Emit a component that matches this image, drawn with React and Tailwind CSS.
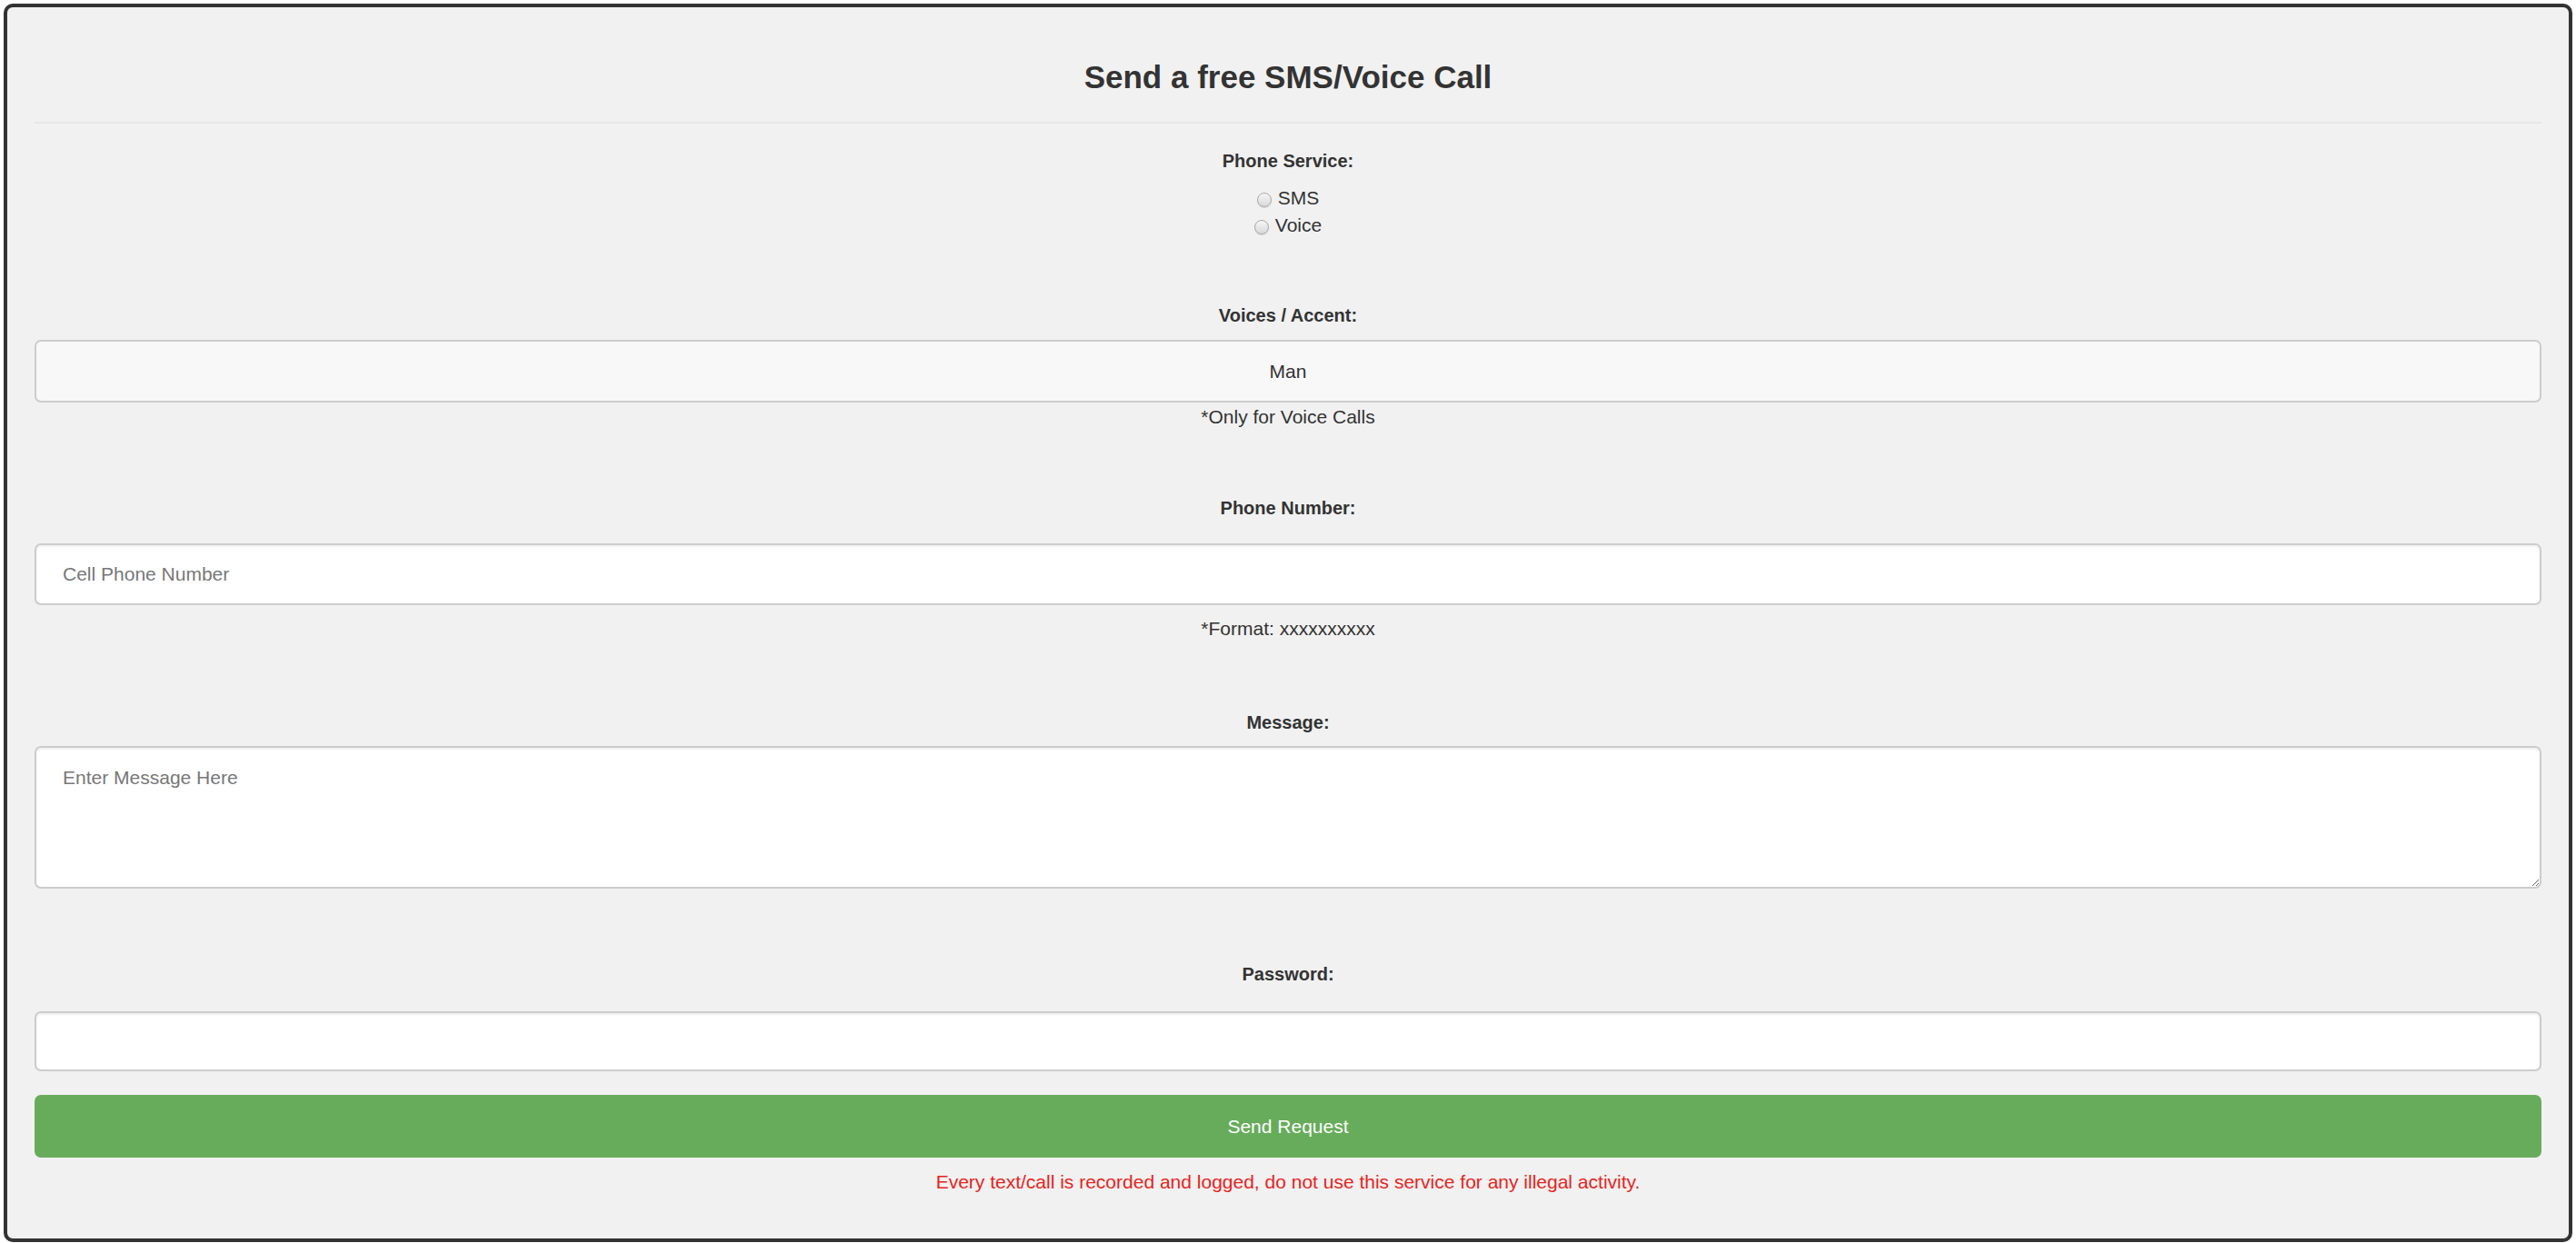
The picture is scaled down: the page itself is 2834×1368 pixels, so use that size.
import React from "react";

function Radio({ label }) {
  return (
    <label className="flex items-center gap-[7px] cursor-pointer">
      <span className="mt-[3px] inline-block w-[16px] h-[16px] rounded-full border border-[#a9a9a9] bg-linear-to-b from-[#f6f6f6] to-[#d9d9d9] shadow-[0_1px_1px_rgba(0,0,0,0.12)]" />
      <span>{label}</span>
    </label>
  );
}

export default function App() {
  const labelCls =
    "block text-center text-[20px] font-bold leading-[28px] text-[#333]";
  const noteCls = "text-center text-[21px] leading-[28px] text-[#333]";
  const inputCls =
    "block w-full rounded-[7px] border-2 border-[#cccccc] bg-white px-[29px] text-[21px] text-[#333] placeholder:text-[#777] shadow-[inset_0_2px_2px_rgba(0,0,0,0.06)] outline-none";

  return (
    <div className="min-h-screen bg-white p-[4px] font-['Liberation_Sans',Arial,sans-serif]">
      <div className="rounded-[10px] border-[4px] border-[#333] bg-[#f1f1f1] px-[30px] pt-[57px] pb-[48px] text-[#333]">
        <h3 className="text-center text-[35px] font-bold leading-[40px] text-[#333]">
          Send a free SMS/Voice Call
        </h3>
        <div className="mt-[29px] h-[2px] bg-[#e7e7e7]" />

        <label className={`mt-[27px] ${labelCls}`}>Phone Service:</label>
        <div className="mt-[12px] flex flex-col items-center text-[21px] leading-[30px]">
          <Radio label="SMS" />
          <Radio label="Voice" />
        </div>

        <label className={`mt-[70px] ${labelCls}`}>Voices / Accent:</label>
        <div className="mt-[13px] flex h-[69px] items-center justify-center rounded-[7px] border-2 border-[#cccccc] bg-[#f8f8f8] text-[21px] text-[#333]">
          Man
        </div>
        <p className={`mt-[2px] ${noteCls}`}>*Only for Voice Calls</p>

        <label className={`mt-[72px] ${labelCls}`}>Phone Number:</label>
        <input
          type="text"
          placeholder="Cell Phone Number"
          className={`mt-[25px] h-[68px] ${inputCls}`}
        />
        <p className={`mt-[12px] ${noteCls}`}>*Format: xxxxxxxxxx</p>

        <label className={`mt-[75px] ${labelCls}`}>Message:</label>
        <textarea
          placeholder="Enter Message Here"
          className={`mt-[12px] h-[157px] pt-[18px] leading-[30px] ${inputCls}`}
        />

        <label className={`mt-[80px] ${labelCls}`}>Password:</label>
        <input type="password" className={`mt-[27px] h-[66px] ${inputCls}`} />

        <button
          type="button"
          className="mt-[26px] block h-[69px] w-full rounded-[7px] bg-[#67ac5b] text-[21px] text-white"
        >
          Send Request
        </button>
        <p className="mt-[13px] text-center text-[21px] leading-[28px] text-[#e8231c]">
          Every text/call is recorded and logged, do not use this service for any illegal activity.
        </p>
      </div>
    </div>
  );
}
